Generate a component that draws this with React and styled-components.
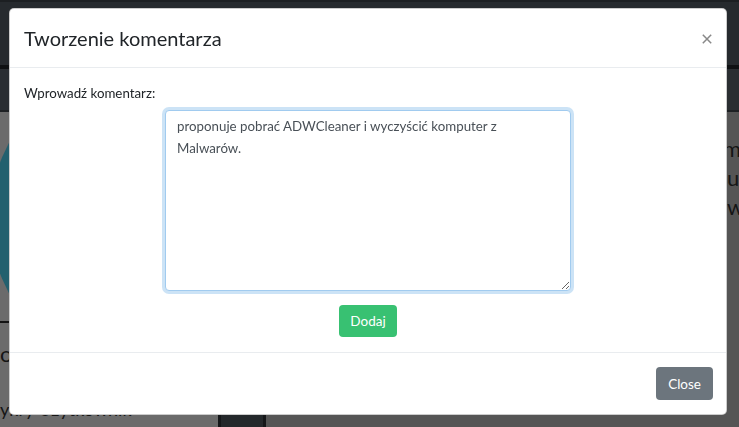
import React from "react";
import styled, { createGlobalStyle } from "styled-components";

const FONT = `"Lato", "Open Sans", "Noto Sans", sans-serif`;

const Global = createGlobalStyle`
  html, body { margin: 0; padding: 0; }
  body {
    width: 739px;
    height: 427px;
    overflow: hidden;
    font-family: ${FONT};
    background: #555555;
  }
  * { box-sizing: border-box; }
`;

/* ---------- dimmed page behind the modal ---------- */
const Page = styled.div`
  display: flex;
  flex-direction: column;
  height: 427px;
  overflow: hidden;
`;

const NavBar = styled.div`
  height: 69px;
  background: #262a2e;
  border-top: 2px solid #1c1f22;
  border-bottom: 4px solid #0f1113;
`;

const SubBar = styled.div`
  height: 43px;
  background: #2a2e32;
  border-bottom: 2px solid #1d2023;
`;

const Main = styled.div`
  flex: 1;
  display: grid;
  grid-template-columns: 218px 48px 1fr;
`;

const LeftCol = styled.div`
  background: #6b6b6b;
  display: flex;
  flex-direction: column;
  overflow: hidden;
`;

const AvatarArea = styled.div`
  height: 211px;
  overflow: hidden;
  border-bottom: 2px solid #141414;
`;

const Avatar = styled.div`
  width: 318px;
  height: 318px;
  margin: -53px 0 0 -10px;
  border-radius: 50%;
  background: #23606e;
`;

const BgText = styled.div`
  font-size: ${(p) => p.$fs || 22}px;
  line-height: 29px;
  color: #151515;
  white-space: nowrap;
  margin-top: ${(p) => p.$mt || 0}px;
  padding-left: ${(p) => p.$pl || 0}px;
`;

const DarkCol = styled.div`
  background: #24282b;
  border-left: 3px solid #151719;
  border-right: 3px solid #151719;
`;

const RightCol = styled.div`
  background: #555555;
  padding-top: 22px;
  overflow: hidden;
`;

/* ---------- modal ---------- */
const Modal = styled.div`
  position: fixed;
  left: 9px;
  top: 8px;
  width: 718px;
  background: #fff;
  border: 1px solid rgba(0, 0, 0, 0.2);
  border-radius: 5px;
  display: flex;
  flex-direction: column;
  color: #212529;
`;

const Header = styled.div`
  display: flex;
  align-items: center;
  justify-content: space-between;
  padding: 16px 14px 15px 14px;
  border-bottom: 1px solid #e9ecef;
`;

const Title = styled.h5`
  margin: 0;
  font-size: 20px;
  font-weight: 400;
  line-height: 27px;
  color: #212529;
`;

const CloseX = styled.button`
  border: 0;
  background: transparent;
  padding: 0;
  width: 11px;
  height: 11px;
  display: flex;
  align-items: center;
  justify-content: center;
  cursor: pointer;
`;

const Body = styled.div`
  padding: 15px 14px 15px 14px;
  font-size: 13.3px;
  line-height: 21px;
`;

const Label = styled.label`
  display: block;
  margin-bottom: 6px;
  color: #212529;
`;

const TextArea = styled.textarea`
  display: block;
  margin: 0 auto;
  width: 406px;
  height: 181px;
  padding: 5px 11px;
  font-family: ${FONT};
  font-size: 13.3px;
  line-height: 21.6px;
  color: #495057;
  border: 1px solid #a1cbef;
  border-radius: 4px;
  box-shadow: 0 0 0 3px rgba(52, 144, 220, 0.25);
  outline: none;
  resize: both;
`;

const Actions = styled.div`
  display: flex;
  justify-content: ${(p) => p.$align || "center"};
  margin-top: ${(p) => p.$mt || 0}px;
`;

const Button = styled.button`
  height: ${(p) => p.$h || 32}px;
  padding: 0 ${(p) => p.$px || 11}px;
  border: 0;
  border-radius: 4px;
  background: ${(p) => p.$bg};
  color: #fff;
  font-family: ${FONT};
  font-size: 13.5px;
  line-height: 20px;
  cursor: pointer;
`;

const Footer = styled.div`
  border-top: 1px solid #e9ecef;
  padding: 14px 13px 14px 14px;
`;

export default function App() {
  return (
    <>
      <Global />
      <Page>
        <NavBar />
        <SubBar />
        <Main>
          <LeftCol>
            <AvatarArea>
              <Avatar />
            </AvatarArea>
            <BgText $mt={16}>ow</BgText>
            <BgText $mt={27} $fs={18}>ykry Użytkownik</BgText>
          </LeftCol>
          <DarkCol />
          <RightCol>
            <BgText $pl={457}>m</BgText>
            <BgText $pl={461}>us</BgText>
            <BgText $pl={461}>w</BgText>
          </RightCol>
        </Main>
      </Page>

      <Modal role="dialog">
        <Header>
          <Title>Tworzenie komentarza</Title>
          <CloseX aria-label="Close">
            <svg width="10" height="10" viewBox="0 0 10 10">
              <path d="M0.8 0.8 L9.2 9.2 M9.2 0.8 L0.8 9.2" stroke="#888" strokeWidth="1.5" />
            </svg>
          </CloseX>
        </Header>
        <Body>
          <Label htmlFor="komentarz">Wprowadź komentarz:</Label>
          <TextArea
            id="komentarz"
            defaultValue="proponuje pobrać ADWCleaner i wyczyścić komputer z Malwarów."
          />
          <Actions $mt={14}>
            <Button $bg="#38c172" $px={11}>Dodaj</Button>
          </Actions>
        </Body>
        <Footer>
          <Actions $align="flex-end">
            <Button $bg="#6c757d" $h={33} $px={12}>Close</Button>
          </Actions>
        </Footer>
      </Modal>
    </>
  );
}
